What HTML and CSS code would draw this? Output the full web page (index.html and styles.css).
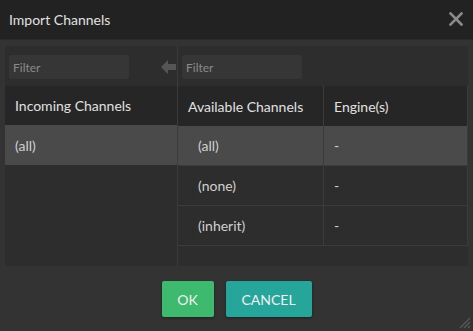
FILE: index.html
```html
<!DOCTYPE html>
<html lang="en">
<head>
    <meta charset="UTF-8">
    <title>Import Channels</title>
    <link rel="stylesheet" href="styles.css">
</head>
<body>
    <div class="dialog">
        <div class="titlebar">
            <span class="title">Import Channels</span>
            <svg class="close" width="14" height="14" viewBox="0 0 14 14">
                <path d="M1.5 1.5 L12.5 12.5 M12.5 1.5 L1.5 12.5" stroke="#8a8a8a" stroke-width="2.6" stroke-linecap="square"/>
            </svg>
        </div>
        <div class="content">
            <div class="panel">
                <div class="side">
                    <div class="filter-bar">
                        <input class="filter" placeholder="Filter">
                        <svg class="arrow" width="15" height="14" viewBox="0 0 15 14">
                            <path d="M0 7 L7 0 L7 4 L15 4 L15 10 L7 10 L7 14 Z" fill="#555"/>
                        </svg>
                    </div>
                    <div class="head-row"><div class="cell">Incoming Channels</div></div>
                    <div class="row selected"><div class="cell">(all)</div></div>
                </div>
                <div class="main">
                    <div class="filter-bar">
                        <input class="filter" placeholder="Filter">
                    </div>
                    <div class="table">
                        <div class="head-row">
                            <div class="cell col-name">Available Channels</div>
                            <div class="cell">Engine(s)</div>
                        </div>
                        <div class="row selected">
                            <div class="cell col-name indent">(all)</div>
                            <div class="cell">-</div>
                        </div>
                        <div class="row">
                            <div class="cell col-name indent">(none)</div>
                            <div class="cell">-</div>
                        </div>
                        <div class="row">
                            <div class="cell col-name indent">(inherit)</div>
                            <div class="cell">-</div>
                        </div>
                    </div>
                </div>
            </div>
            <div class="buttons">
                <button class="btn btn-ok">OK</button>
                <button class="btn btn-cancel">CANCEL</button>
            </div>
            <svg class="grip" width="14" height="14" viewBox="0 0 14 14">
                <path d="M13 3 L3 13 M13 7 L7 13 M13 11 L11 13" stroke="#5a5a5a" stroke-width="1.2"/>
            </svg>
        </div>
    </div>
</body>
</html>
```

FILE: styles.css
```css
* {
    margin: 0;
    padding: 0;
    box-sizing: border-box;
}
body {
    background-color: #333;
    font-family: "Lato", "Open Sans", sans-serif;
    color: #ddd;
}
.dialog {
    width: 473px;
    height: 331px;
    display: flex;
    flex-direction: column;
    background-color: #333;
}
.titlebar {
    height: 40px;
    background-color: #222;
    display: flex;
    align-items: center;
    justify-content: space-between;
    padding: 0 9px 0 9px;
    border-bottom: 1px solid #2a2a2a;
}
.title {
    font-size: 14px;
    color: #e0e0e0;
}
.close {
    margin-right: 1px;
    margin-top: -1px;
}
.content {
    position: relative;
    flex: 1;
    padding: 6px 5px 0 5px;
}
.panel {
    display: grid;
    grid-template-columns: 173px 1fr;
    height: 220px;
    background-color: #2d2d2d;
}
.side {
    border-right: 1px solid #3b3b3b;
}
.filter-bar {
    height: 40px;
    display: flex;
    align-items: center;
    padding-left: 4px;
    padding-top: 2px;
}
.filter {
    width: 120px;
    height: 24px;
    border: none;
    border-radius: 2px;
    background-color: #363636;
    color: #ccc;
    font-family: "Lato", "Open Sans", sans-serif;
    font-size: 12px;
    padding-left: 4px;
    outline: none;
}
.filter::placeholder {
    color: #8a8a8a;
}
.arrow {
    margin-left: 32px;
}
.table {
    border-right: 1px solid #3b3b3b;
}
.head-row, .row {
    display: grid;
    height: 40px;
}
.table .head-row, .table .row {
    grid-template-columns: 146px 1fr;
    border-bottom: 1px solid #3b3b3b;
}
.head-row {
    background-color: #262626;
    height: 39px;
    font-size: 14px;
    color: #e0e0e0;
}
.table .head-row {
    height: 40px;
    border-bottom: none;
}
.row {
    font-size: 14px;
    color: #d0d0d0;
}
.row.selected {
    background-color: #4a4a4a;
}
.cell {
    display: flex;
    align-items: center;
    padding-left: 10px;
}
.col-name {
    border-right: 1px solid #3b3b3b;
}
.indent {
    padding-left: 20px;
}
.buttons {
    display: flex;
    justify-content: center;
    gap: 12px;
    margin-top: 15px;
}
.btn {
    height: 36px;
    border: none;
    border-radius: 2px;
    color: #f0f0f0;
    font-family: "Lato", "Open Sans", sans-serif;
    font-size: 14px;
    box-shadow: 0 1px 3px rgba(0, 0, 0, 0.4);
}
.btn-ok {
    width: 52px;
    background-color: #3dba6e;
}
.btn-cancel {
    width: 86px;
    background-color: #26a69a;
}
.grip {
    position: absolute;
    right: 2px;
    bottom: 2px;
}
```
